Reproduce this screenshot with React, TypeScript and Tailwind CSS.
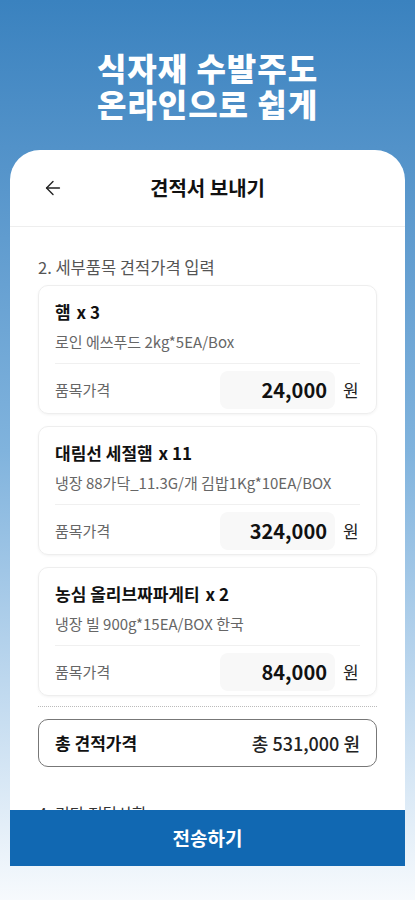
import { ArrowLeft } from "lucide-react";

const items = [
    { name: "햄", qty: 3, spec: "로인 에쓰푸드 2kg*5EA/Box", price: "24,000" },
    { name: "대림선 세절햄", qty: 11, spec: "냉장 88가닥_11.3G/개 김밥1Kg*10EA/BOX", price: "324,000" },
    { name: "농심 올리브짜파게티", qty: 2, spec: "냉장 빌 900g*15EA/BOX 한국", price: "84,000" },
];

export default function App() {
    return (
        <div
            className="h-[900px] w-full overflow-hidden flex flex-col bg-gradient-to-b from-[#3a82bf] via-[#80b3dd] to-[#f7fafd]"
            style={{ fontFamily: '"Noto Sans CJK KR", "Noto Sans", sans-serif' }}
        >
            <h1 className="pt-[49px] text-center text-[32px] leading-[36px] font-black text-white tracking-[0.03em]">
                식자재 수발주도
                <br />
                온라인으로 쉽게
            </h1>

            <div className="mx-[10px] mt-[29px] rounded-t-[30px] bg-white flex flex-col">
                <div className="relative h-[77px] flex items-center justify-center border-b border-[#eeeeee]">
                    <ArrowLeft className="absolute left-[32px] text-[#222]" size={22} strokeWidth={1.5} />
                    <h2 className="text-[20px] font-bold text-[#111]">견적서 보내기</h2>
                </div>

                <div className="h-[583px] overflow-hidden px-[28px] pt-[29px]">
                    <p className="text-[16.5px] leading-[22px] text-[#555]">2. 세부품목 견적가격 입력</p>

                    <div className="mt-[7px] flex flex-col gap-[12px]">
                        {items.map((it) => (
                            <ItemCard key={it.name} {...it} />
                        ))}
                    </div>

                    <div className="mt-[10px] border-t border-dotted border-[#bbbbbb]" />

                    <div className="mt-[12px] h-[48px] rounded-[10px] border border-[#777] flex items-center justify-between px-[16px]">
                        <span className="text-[17px] font-bold text-[#111]">총 견적가격</span>
                        <span className="text-[18px] font-medium text-[#222]">총 531,000 원</span>
                    </div>

                    <p className="mt-[36px] text-[16px] leading-[20px] text-[#333]">4. 기타 전달사항</p>
                </div>

                <button className="h-[56px] w-full bg-[#1168b2] text-white text-[19px] font-bold">
                    전송하기
                </button>
            </div>
        </div>
    );
}

function ItemCard({ name, qty, spec, price }: { name: string; qty: number; spec: string; price: string }) {
    return (
        <div className="h-[129px] rounded-[10px] border border-[#eeeeee] shadow-[0_1px_3px_rgba(0,0,0,0.05)] px-[16px] pt-[14px] pb-[5px] flex flex-col">
            <p className="text-[17px] leading-[24px] font-bold text-[#111]">
                {name} <span className="ml-[2px]">x {qty}</span>
            </p>
            <p className="mt-[8px] text-[15px] leading-[20px] text-[#666] whitespace-nowrap">{spec}</p>
            <div className="mt-[11px] border-t border-[#f0f0f0]" />
            <div className="mt-[7px] flex items-center justify-between">
                <span className="text-[15px] text-[#666]">품목가격</span>
                <div className="flex items-center">
                    <div className="w-[115px] h-[38px] rounded-[8px] bg-[#f8f8f8] flex items-center justify-end pr-[8px]">
                        <span className="text-[20px] font-bold text-[#111]">{price}</span>
                    </div>
                    <span className="ml-[8px] w-[17px] text-[17px] text-[#222]">원</span>
                </div>
            </div>
        </div>
    );
}
